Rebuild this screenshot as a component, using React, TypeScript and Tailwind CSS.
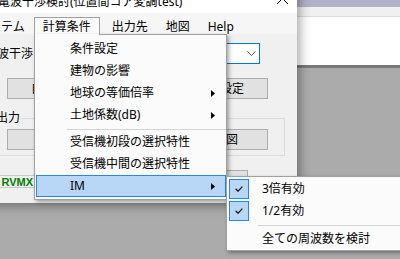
import React from "react";

const jp = "font-['Noto_Sans','Noto_Sans_CJK_JP',sans-serif] text-[12px] text-black";

function Arrow() {
  return (
    <svg width="4" height="7" viewBox="0 0 4 7">
      <path d="M0 0L4 3.5L0 7Z" fill="#000" />
    </svg>
  );
}

function Check() {
  return (
    <svg width="8" height="6" viewBox="0 0 8 6">
      <path d="M0.6 2.8L3 5.2L7.4 0.6" fill="none" stroke="#1a1a1a" strokeWidth="1.3" />
    </svg>
  );
}

function Btn({ label, className = "" }: { label: string; className?: string }) {
  return (
    <div
      className={`flex h-[21px] w-[120px] shrink-0 items-center justify-center border border-[#adadad] bg-[#e1e1e1] leading-[16px] ${className}`}
    >
      {label}
    </div>
  );
}

function MenuItem({ label, arrow, active }: { label: string; arrow?: boolean; active?: boolean }) {
  return (
    <div
      className={
        active
          ? "ml-[1px] flex h-[22px] items-center justify-between border border-[#2b86e0] bg-[#b8d6f5] pl-[33px] pr-[10px] leading-[16px]"
          : "ml-[1px] flex h-[22px] items-center justify-between pl-[34px] pr-[11px] leading-[16px]"
      }
    >
      <span>{label}</span>
      {arrow && <Arrow />}
    </div>
  );
}

export default function App() {
  return (
    <div className={`relative h-[259px] w-[400px] overflow-hidden bg-[#ababab] ${jp}`}>
      {/* window behind */}
      <div className="absolute left-[280px] top-0 flex w-[140px] flex-col">
        <div className="h-[7px] bg-[#b0b3c7]" />
        <div className="h-[10px] border-b border-[#dcdcdc] bg-[#f0f0f0]" />
        <div className="h-[48px] bg-white" />
        <div className="h-[3px] bg-[#787878]" />
      </div>

      {/* main window */}
      <div className="absolute left-[-40px] top-[-17px] flex h-[220px] w-[337px] flex-col bg-[#f0f0f0] shadow-[3px_3px_10px_rgba(0,0,0,0.35)]">
        <div className="relative h-[30px] shrink-0 bg-white pl-[38px] pt-[12px] leading-[14px]">
          電波干渉検討(位置間コア変調test)
          <svg className="absolute left-[317px] top-[10px]" width="11" height="11" viewBox="0 0 11 11">
            <path d="M0 0L11 11M11 0L0 11" stroke="#000" strokeWidth="1" />
          </svg>
        </div>

        <div className="flex h-[21px] shrink-0 items-start bg-[#f6f6f6] pl-[8px]">
          <div className="h-[21px] px-[9px] pt-[6px] leading-[16px]">システム</div>
          <div className="mt-[4px] h-[17px] border-x border-t border-[#a0a0a0] bg-[#fbfbfb] px-[8px] pt-[1px] leading-[16px]">
            計算条件
          </div>
          <div className="ml-[3px] h-[21px] px-[9px] pt-[6px] leading-[16px]">出力先</div>
          <div className="h-[21px] px-[9px] pt-[6px] leading-[16px]">地図</div>
          <div className="h-[21px] px-[9px] pt-[6px] leading-[16px]">Help</div>
        </div>

        <div className="flex flex-1 flex-col">
          <div className="mt-[9px] flex h-[21px] items-center">
            <span className="ml-[25px] w-[48px] leading-[16px]">電波干渉</span>
            <div className="ml-[7px] flex h-[21px] w-[220px] items-center justify-end border border-[#0078d7] bg-white pr-[3px]">
              <svg width="9" height="5" viewBox="0 0 9 5">
                <path d="M0.5 0.5L4.5 4.5L8.5 0.5" fill="none" stroke="#555" strokeWidth="1" />
              </svg>
            </div>
          </div>

          <div className="mt-[14px] flex">
            <Btn label="自動計算実行" className="ml-[47px]" />
            <Btn label="周波数帯設定" className="ml-[21px]" />
          </div>

          <div className="relative ml-[35px] mt-[19px] h-[38px] w-[290px] border border-[#dcdcdc]">
            <span className="absolute left-0 top-[-9px] bg-[#f0f0f0] pr-[1px] leading-[16px]">出力</span>
            <div className="flex pt-[10px]">
              <Btn label="出力" className="ml-[11px]" />
              <Btn label="電界強度図" className="ml-[21px]" />
            </div>
          </div>

          <div className="mt-[14px] flex h-[20px] items-start">
            <div className="ml-[30px] mt-[5px] flex h-[13px] w-[45px] items-center justify-end border-y border-[#c8c8c8] pr-[2px] font-['Liberation_Sans',sans-serif] text-[11px] font-bold leading-[12px] text-[#008000]">
              RVMX
            </div>
            <Btn label="一覧表示" className="ml-[93px] h-[20px]" />
          </div>
        </div>
      </div>

      {/* dropdown menu */}
      <div className="absolute left-[34px] top-[34px] h-[166px] w-[193px] border border-[#a0a0a0] bg-[#fbfbfb] pt-[3px] shadow-[2px_2px_4px_rgba(0,0,0,0.35)]">
        <div className="absolute left-0 top-[-1px] h-px w-[64px] bg-[#fbfbfb]" />
        <MenuItem label="条件設定" />
        <MenuItem label="建物の影響" />
        <MenuItem label="地球の等価倍率" arrow />
        <MenuItem label="土地係数(dB)" arrow />
        <div className="h-[5px] pt-[3px]">
          <div className="ml-[32px] h-px bg-[#d4d4d4]" />
        </div>
        <MenuItem label="受信機初段の選択特性" />
        <MenuItem label="受信機中間の選択特性" />
        <MenuItem label="IM" arrow active />
      </div>

      {/* submenu */}
      <div className="absolute left-[226px] top-[176px] h-[75px] w-[190px] border border-[#a0a0a0] bg-[#fbfbfb] pt-[1px] shadow-[2px_2px_4px_rgba(0,0,0,0.35)]">
        <div className="flex h-[22px] items-center">
          <div className="ml-[2px] flex h-[20px] w-[20px] items-center justify-center border border-[#2b86e0] bg-[#b8d6f5]">
            <Check />
          </div>
          <span className="ml-[13px] leading-[16px]">3倍有効</span>
        </div>
        <div className="flex h-[22px] items-center">
          <div className="ml-[2px] flex h-[20px] w-[20px] items-center justify-center border border-[#2b86e0] bg-[#b8d6f5]">
            <Check />
          </div>
          <span className="ml-[13px] leading-[16px]">1/2有効</span>
        </div>
        <div className="h-[7px] pt-[3px]">
          <div className="ml-[31px] h-px bg-[#d4d4d4]" />
        </div>
        <div className="flex h-[20px] items-center pl-[35px] leading-[16px]">全ての周波数を検討</div>
      </div>
    </div>
  );
}
